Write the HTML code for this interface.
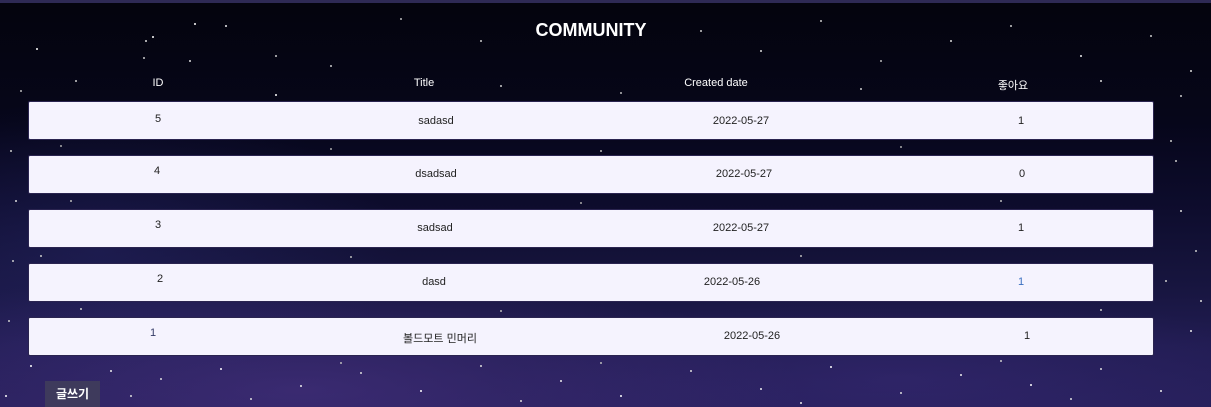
<!DOCTYPE html>
<html><head><meta charset="utf-8"><style>
*{margin:0;padding:0;box-sizing:border-box}
body{width:1211px;height:407px;overflow:hidden;position:relative;font-family:"Liberation Sans","Noto Sans CJK KR",sans-serif;
background:linear-gradient(180deg,#04040d 0%,#06061a 30%,#0d0c2c 50%,#17153f 70%,#211c52 85%,#261f5a 100%);}
.bar{position:absolute;left:0;top:0;width:1211px;height:3px;background:#2e2a55}
.neb{position:absolute;left:0;top:0;width:1211px;height:407px;background:radial-gradient(ellipse 500px 120px at 300px 390px,rgba(90,60,150,.4),transparent),radial-gradient(ellipse 400px 90px at 900px 380px,rgba(70,50,140,.3),transparent),radial-gradient(ellipse 300px 150px at 100px 250px,rgba(50,50,130,.3),transparent)}
.stars{position:absolute;left:0;top:0;width:2px;height:2px;border-radius:50%;background:transparent;
box-shadow:152px 36px #fff,145px 40px #ddd,36px 48px #fff,194px 23px #fff,225px 25px #eee,143px 57px #ccc,189px 60px #ddd,275px 55px #ccc,330px 65px #ccc,400px 18px #bbb,480px 40px #ccc,700px 30px #ccc,760px 50px #ddd,820px 20px #ccc,880px 60px #bbb,950px 40px #ddd,1010px 25px #ccc,1080px 55px #eee,1150px 35px #ccc,1190px 70px #ddd,20px 90px #bbb,75px 80px #ccc,275px 94px #fff,500px 85px #ccc,620px 92px #bbb,860px 88px #ccc,1100px 80px #ddd,1180px 95px #ccc,10px 150px #ccc,15px 200px #ddd,12px 260px #ccc,1170px 140px #ccc,1180px 210px #ddd,1165px 280px #ccc,1190px 330px #eee,30px 365px #fff,110px 370px #eee,160px 378px #ddd,220px 368px #fff,300px 385px #eee,360px 372px #ddd,420px 390px #fff,480px 365px #ddd,560px 380px #eee,620px 395px #fff,690px 370px #ddd,760px 388px #eee,830px 366px #fff,900px 392px #ddd,960px 374px #eee,1030px 384px #fff,1100px 368px #ddd,1160px 390px #eee,250px 398px #ddd,520px 400px #ddd,800px 402px #eee,1070px 398px #ddd,5px 395px #fff,130px 395px #ddd,340px 362px #bbb,600px 362px #bbb,1000px 360px #ccc,60px 145px #aaa,330px 148px #aaa,600px 150px #bbb,900px 146px #aaa,1175px 160px #ccc,70px 200px #bbb,580px 202px #aaa,1000px 200px #bbb,40px 255px #ccc,350px 256px #bbb,800px 255px #bbb,1195px 250px #ccc,80px 308px #ccc,500px 310px #bbb,1100px 309px #ccc,1200px 300px #ddd,8px 320px #ccc}
h1{position:absolute;top:20px;left:0;width:1182px;text-align:center;color:#fff;font-size:18px;font-weight:bold}
.h{position:absolute;top:77px;color:#fff;font-size:11px;transform:translateX(-50%)}
.row{position:absolute;left:28px;width:1126px;height:39px;background:#f5f3fe;border:1px solid #2a2450;border-radius:2px}
.c{position:absolute;color:#222;font-size:11px;transform:translateX(-50%);white-space:nowrap}
.btn{position:absolute;left:45px;top:381px;width:55px;height:26px;background:#3e3a5c;color:#fff;font-size:12px;font-weight:bold;text-align:center;line-height:26px}
</style></head><body>
<div class="neb"></div><div class="stars"></div><div class="bar"></div>
<h1>COMMUNITY</h1>
<div class="h" style="left:158px">ID</div>
<div class="h" style="left:424px">Title</div>
<div class="h" style="left:716px">Created date</div>
<div class="h" style="left:1013px">좋아요</div>

<div class="row" style="top:101px"></div>
<div class="c" style="left:158px;top:113px">5</div>
<div class="c" style="left:436px;top:115px">sadasd</div>
<div class="c" style="left:741px;top:115px">2022-05-27</div>
<div class="c" style="left:1021px;top:115px">1</div>

<div class="row" style="top:155px"></div>
<div class="c" style="left:157px;top:165px">4</div>
<div class="c" style="left:436px;top:168px">dsadsad</div>
<div class="c" style="left:744px;top:168px">2022-05-27</div>
<div class="c" style="left:1022px;top:168px">0</div>

<div class="row" style="top:209px"></div>
<div class="c" style="left:158px;top:219px">3</div>
<div class="c" style="left:435px;top:222px">sadsad</div>
<div class="c" style="left:741px;top:222px">2022-05-27</div>
<div class="c" style="left:1021px;top:222px">1</div>

<div class="row" style="top:263px"></div>
<div class="c" style="left:160px;top:273px">2</div>
<div class="c" style="left:434px;top:276px">dasd</div>
<div class="c" style="left:732px;top:276px">2022-05-26</div>
<div class="c" style="left:1021px;top:276px;color:#3a6fc0">1</div>

<div class="row" style="top:317px"></div>
<div class="c" style="left:153px;top:327px;color:#333a66">1</div>
<div class="c" style="left:440px;top:330px">볼드모트 민머리</div>
<div class="c" style="left:752px;top:330px">2022-05-26</div>
<div class="c" style="left:1027px;top:330px">1</div>

<div class="btn">글쓰기</div>
</body></html>
